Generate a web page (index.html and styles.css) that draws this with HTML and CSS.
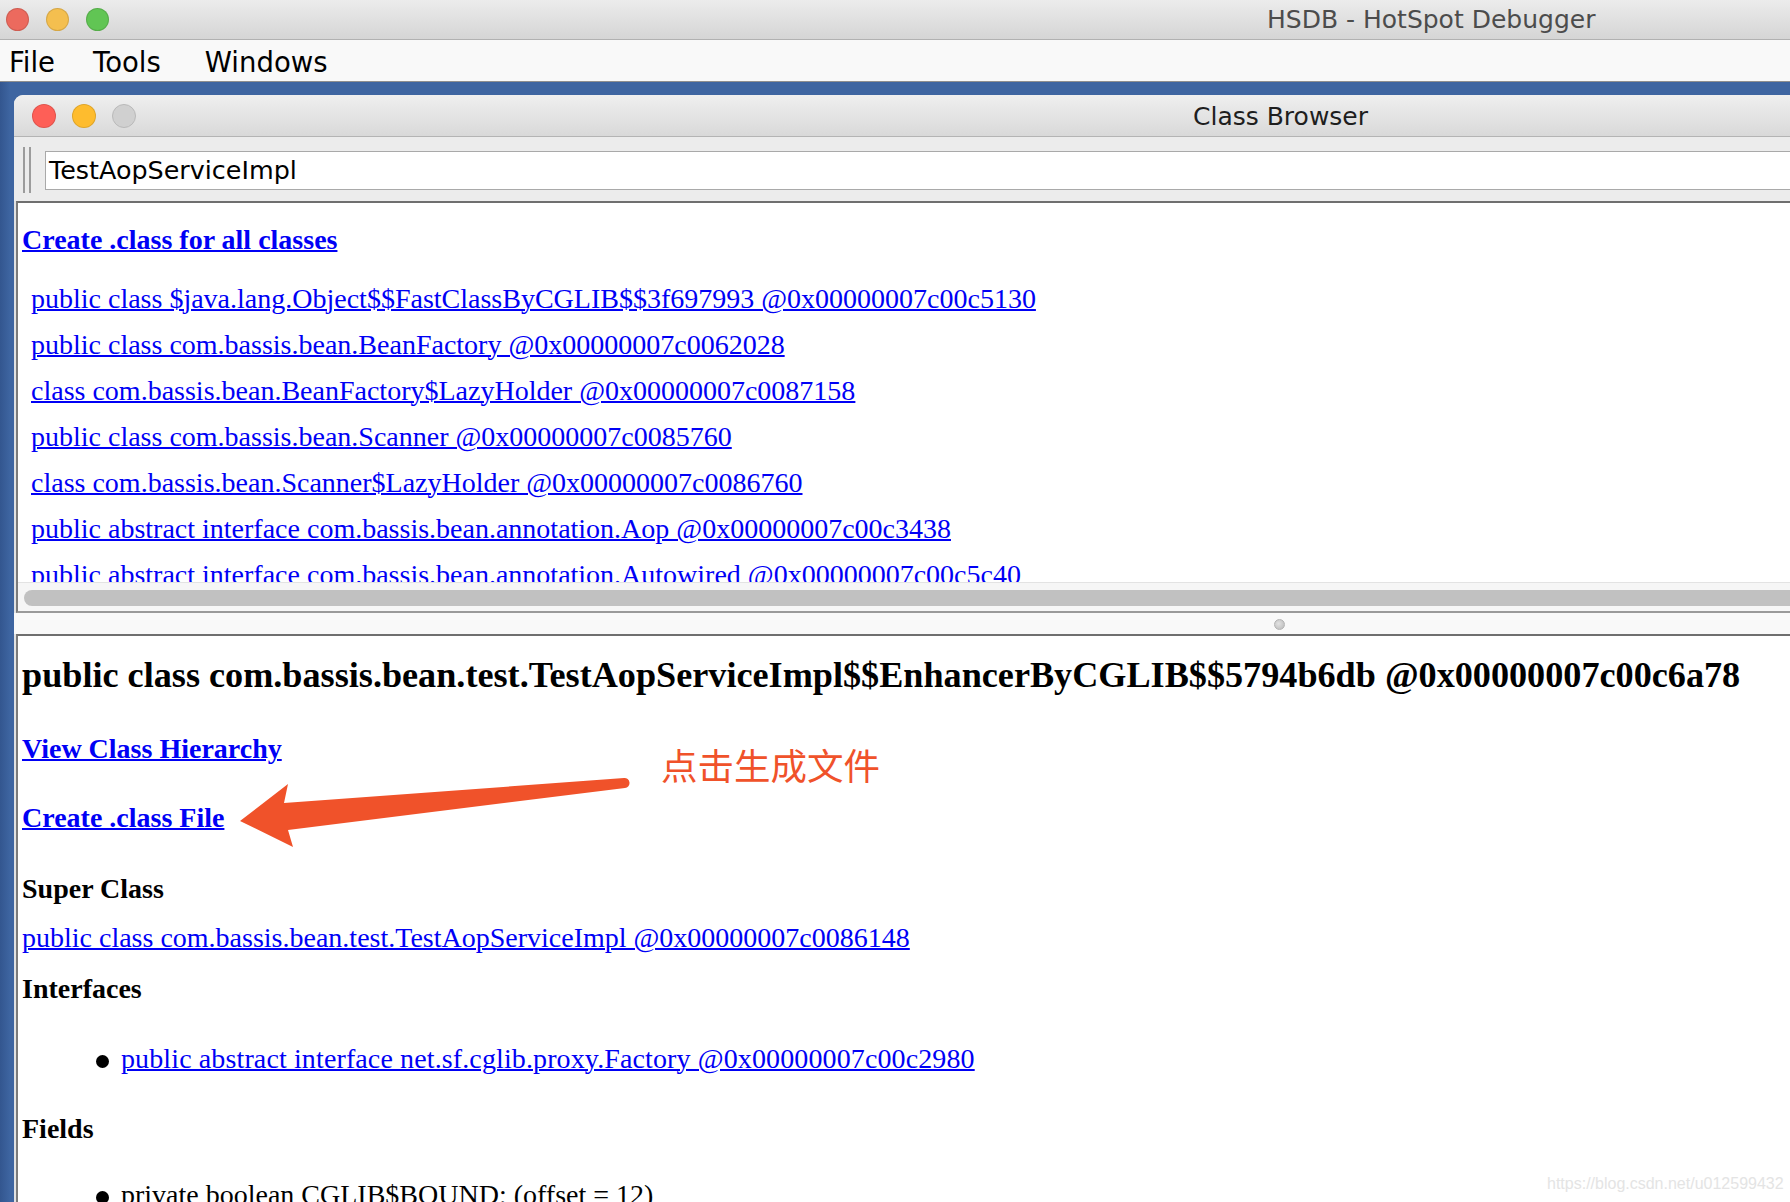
FILE: index.html
```html
<!DOCTYPE html>
<html lang="en">
<head>
  <meta charset="UTF-8" />
  <title>HSDB - HotSpot Debugger</title>
  <link rel="stylesheet" href="styles.css">
</head>
<body>
<div class="app">

  <!-- main window -->
  <div class="titlebar">
    <div class="lights">
      <span class="light red"></span>
      <span class="light yellow"></span>
      <span class="light green"></span>
    </div>
    <span class="app-title">HSDB - HotSpot Debugger</span>
  </div>
  <div class="menubar">
    <span>File</span>
    <span>Tools</span>
    <span class="menu-last">Windows</span>
  </div>

  <div class="desktop">
    <!-- Class Browser internal frame -->
    <div class="frame">
      <div class="frame-title">
        <div class="lights frame-lights">
          <span class="light red"></span>
          <span class="light yellow"></span>
          <span class="light off"></span>
        </div>
        <span class="frame-name">Class Browser</span>
      </div>

      <div class="toolbar">
        <span class="grip"></span>
        <div class="search">TestAopServiceImpl</div>
      </div>

      <div class="pane pane-top">
        <div class="list-view">
          <div class="all-row"><a href="#">Create .class for all classes</a></div>
          <div class="class-row"><a href="#">public class $java.lang.Object$$FastClassByCGLIB$$3f697993 @0x00000007c00c5130</a></div>
          <div class="class-row"><a href="#">public class com.bassis.bean.BeanFactory @0x00000007c0062028</a></div>
          <div class="class-row"><a href="#">class com.bassis.bean.BeanFactory$LazyHolder @0x00000007c0087158</a></div>
          <div class="class-row"><a href="#">public class com.bassis.bean.Scanner @0x00000007c0085760</a></div>
          <div class="class-row"><a href="#">class com.bassis.bean.Scanner$LazyHolder @0x00000007c0086760</a></div>
          <div class="class-row"><a href="#">public abstract interface com.bassis.bean.annotation.Aop @0x00000007c00c3438</a></div>
          <div class="class-row"><a href="#">public abstract interface com.bassis.bean.annotation.Autowired @0x00000007c00c5c40</a></div>
        </div>
        <div class="hscroll"><div class="thumb"></div></div>
      </div>

      <div class="divider"><span class="knob"></span></div>

      <div class="pane pane-bottom">
        <h2 class="class-head">public class com.bassis.bean.test.TestAopServiceImpl$$EnhancerByCGLIB$$5794b6db @0x00000007c00c6a78</h2>
        <div class="row-view"><a href="#" class="strong-link">View Class Hierarchy</a></div>
        <div class="row-create"><a href="#" class="strong-link">Create .class File</a></div>
        <div class="row-label row-super">Super Class</div>
        <div class="row-superlink"><a href="#">public class com.bassis.bean.test.TestAopServiceImpl @0x00000007c0086148</a></div>
        <div class="row-label">Interfaces</div>
        <div class="row-item row-iface"><span class="bullet"></span><a href="#">public abstract interface net.sf.cglib.proxy.Factory @0x00000007c00c2980</a></div>
        <div class="row-label">Fields</div>
        <div class="row-item row-field"><span class="bullet"></span>private boolean CGLIB$BOUND; (offset = 12)</div>
      </div>
    </div>
  </div>

  <!-- annotation drawn over the screenshot -->
  <svg class="arrow" width="1790" height="1202" viewBox="0 0 1790 1202">
    <path d="M240 821 L288 784 L284 803 L624 778 A5 5 0 0 1 625 788 L288 830 L293 847 Z" fill="#f0522a"/>
  </svg>
  <div class="note">点击生成文件</div>
  <div class="watermark">https://blog.csdn.net/u012599432</div>
</div>
</body>
</html>
```

FILE: styles.css
```css
* {
  margin: 0;
  padding: 0;
  box-sizing: border-box;
}

body {
  background: #3e65a1;
}

.app {
  width: 1790px;
  height: 1202px;
  position: relative;
  overflow: hidden;
  display: flex;
  flex-direction: column;
  font-family: "DejaVu Sans", sans-serif;
}

/* window chrome */
.titlebar {
  height: 40px;
  flex: none;
  display: flex;
  align-items: center;
  background: linear-gradient(#ececec, #d5d5d5);
  border-bottom: 1px solid #b1b1b1;
}

.lights {
  display: flex;
  gap: 17px;
  padding-left: 6px;
}

.light {
  width: 23px;
  height: 23px;
  border-radius: 50%;
  border: 1px solid rgba(0, 0, 0, 0.12);
}

.light.red { background: #ec6a5e; }
.light.yellow { background: #f4bf4f; }
.light.green { background: #61c554; }
.light.off { background: #d0d0d0; border-color: #b9b9b9; }

.app-title {
  margin-left: 1158px;
  font-size: 25px;
  color: #4c4c4c;
}

.menubar {
  height: 42px;
  flex: none;
  display: flex;
  align-items: center;
  gap: 38px;
  padding: 2px 0 0 9px;
  background: #f9f9f9;
  border-bottom: 1px solid #8f8f8f;
  font-size: 27.5px;
  color: #000;
}

.menu-last {
  margin-left: 6px;
}

.desktop {
  flex: 1;
  min-height: 0;
  padding: 13px 0 0 14px;
  background: linear-gradient(90deg, #33568f, #3e65a1 10px);
}

.frame {
  width: 1900px;
  height: 100%;
  display: flex;
  flex-direction: column;
  background: #e2e2e2;
  border-radius: 9px 0 0 0;
  overflow: hidden;
}

.frame-title {
  height: 42px;
  flex: none;
  display: flex;
  align-items: center;
  padding: 1px 0 0 18px;
  background: linear-gradient(#efefef, #d9d9d9);
  border-bottom: 1px solid #b4b4b4;
}

.frame-lights {
  gap: 16px;
  padding-left: 0;
}

.frame-lights .light {
  width: 24px;
  height: 24px;
}

.frame-lights .light.red { background: #fe5f57; }
.frame-lights .light.yellow { background: #febc2e; }

.frame-name {
  margin-left: 1057px;
  font-size: 25px;
  color: #1e1e1e;
}

.toolbar {
  height: 64px;
  flex: none;
  display: flex;
  align-items: center;
  padding: 2px 0 0 9px;
  background: #ececec;
}

.grip {
  width: 8px;
  height: 46px;
  border-left: 2px solid #9c9c9c;
  border-right: 2px solid #9c9c9c;
}

.search {
  flex: 1;
  height: 39px;
  margin-left: 14px;
  padding-left: 3px;
  background: #fff;
  border: 1px solid #a9a9a9;
  font-size: 25.4px;
  line-height: 37px;
  color: #000;
}

/* html panes */
.pane {
  margin-left: 2px;
  background: #fff;
  border-left: 2px solid #7b7b7b;
  border-top: 2px solid #6f6f6f;
  font-family: "Liberation Serif", "Times New Roman", serif;
  font-size: 28px;
  color: #000;
  white-space: nowrap;
}

.pane a {
  color: #0000f5;
  text-decoration: underline;
  text-decoration-thickness: 2px;
}

.pane-top {
  height: 412px;
  flex: none;
  display: flex;
  flex-direction: column;
  border-bottom: 2px solid #9a9a9a;
}

.list-view {
  height: 379px;
  flex: none;
  overflow: hidden;
  padding-left: 4px;
}

.all-row {
  height: 73px;
  line-height: 73px;
  font-weight: bold;
}

.class-row {
  height: 46px;
  line-height: 46px;
  padding-left: 9px;
}

.hscroll {
  height: 29px;
  flex: none;
  padding: 7px 0 0 6px;
  background: #f6f6f6;
  border-top: 1px solid #e3e3e3;
}

.thumb {
  height: 16px;
  background: #c1c1c1;
  border-radius: 8px;
}

.divider {
  height: 21px;
  flex: none;
  display: flex;
  align-items: center;
  padding: 2px 0 0 1260px;
  background: #f9f9f9;
}

.knob {
  width: 11px;
  height: 11px;
  border-radius: 50%;
  background: radial-gradient(circle at 40% 40%, #e2e2e2, #b8b8b8);
  border: 1px solid #b3b3b3;
}

.pane-bottom {
  flex: 1;
  padding-left: 4px;
}

.class-head {
  height: 78px;
  line-height: 78px;
  font-size: 36.2px;
  font-weight: bold;
}

.strong-link {
  font-weight: bold;
}

.row-view {
  height: 70px;
  line-height: 70px;
}

.row-create {
  height: 68px;
  line-height: 68px;
}

.row-label {
  height: 78px;
  line-height: 78px;
  font-weight: bold;
}

.row-super {
  height: 74px;
  line-height: 74px;
}

.row-superlink {
  height: 24px;
  line-height: 24px;
}

.row-iface {
  height: 62px;
  line-height: 62px;
}

.row-iface a {
  letter-spacing: 0.12px;
}

.row-field {
  height: 54px;
  line-height: 54px;
}

.bullet {
  display: inline-block;
  width: 13px;
  height: 13px;
  margin: 0 12px 0 74px;
  border-radius: 50%;
  background: #000;
  vertical-align: middle;
}

/* annotation */
.arrow {
  position: absolute;
  top: 0;
  left: 0;
  pointer-events: none;
}

.note {
  position: absolute;
  left: 661px;
  top: 747px;
  font-family: "Noto Sans CJK SC", sans-serif;
  font-size: 36.5px;
  line-height: 36px;
  color: #f0522a;
}

.watermark {
  position: absolute;
  left: 1547px;
  top: 1174px;
  font-family: "Liberation Sans", Arial, sans-serif;
  font-size: 16px;
  line-height: 20px;
  color: #e4e4e4;
}
```
